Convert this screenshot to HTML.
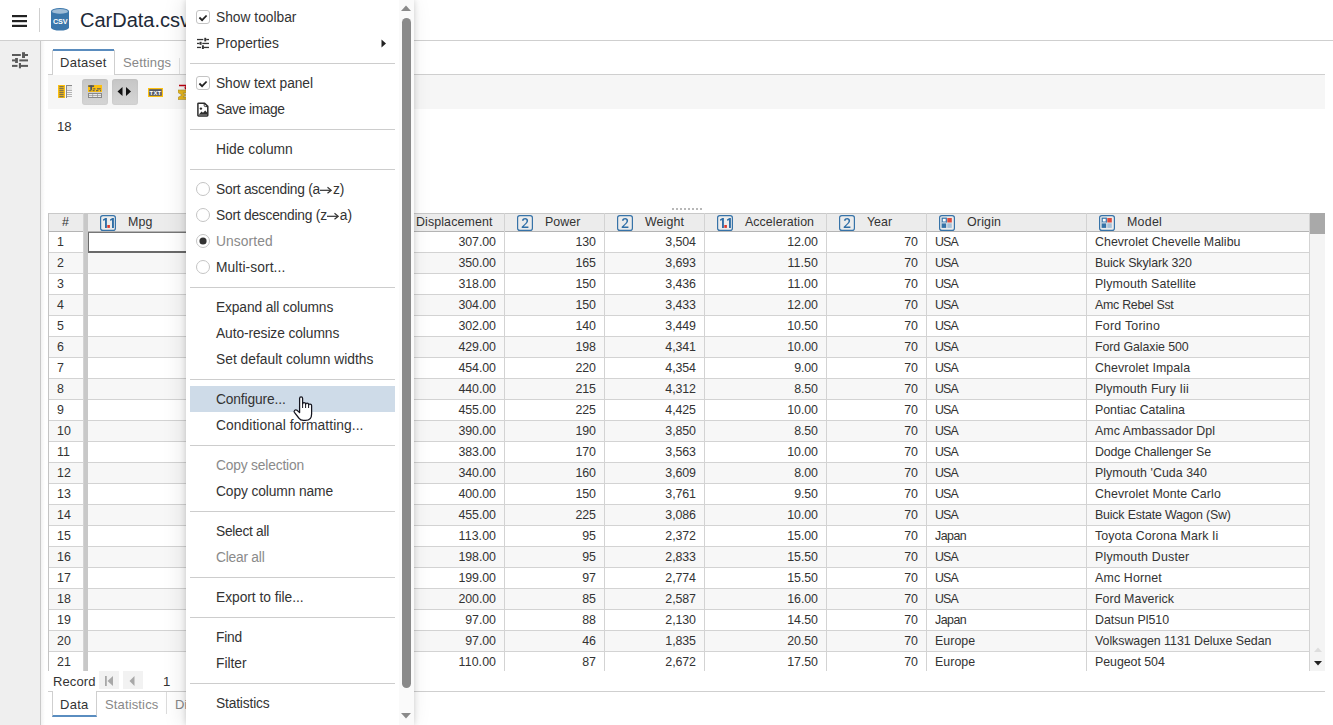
<!DOCTYPE html>
<html><head><meta charset="utf-8">
<style>
*{box-sizing:border-box;margin:0;padding:0}
html,body{width:1333px;height:725px;overflow:hidden;background:#fff;font-family:"Liberation Sans",sans-serif;color:#333;position:relative}
.abs{position:absolute}
#hdr{position:absolute;left:0;top:0;width:1333px;height:41px;border-bottom:1px solid #cfcfcf;background:#fff}
#side{position:absolute;left:0;top:41px;width:41px;height:684px;background:#efefef;border-right:1px solid #c9c9c9}
#sideshadow{position:absolute;left:41px;top:41px;width:4px;height:684px;background:linear-gradient(to right,rgba(0,0,0,0.05),rgba(0,0,0,0))}
.tab{position:absolute;font-size:13px;line-height:26px;color:#888;padding-left:8px}
.tabline{position:absolute;height:1px;background:#cfcfcf}
#tbar{position:absolute;left:48px;top:75px;width:1277px;height:34px;background:#f6f6f6}
.tbtn{position:absolute;top:79px;width:26px;height:26px;border-radius:3px;background:linear-gradient(#c6c6c6,#d5d5d5);box-shadow:inset 0 0 2px rgba(0,0,0,0.08)}
#tbl{position:absolute;left:0;top:0;width:1333px;height:671px;overflow:hidden}
#tblclip{position:absolute;left:48px;top:213px;width:1277px;height:458px;overflow:hidden}
#tblin{position:absolute;left:-48px;top:-213px;width:1333px;height:725px}
.hdrbg{position:absolute;left:48px;top:213px;width:1261px;height:19px;background:#ececec;border-top:1px solid #c9c9c9;border-bottom:1px solid #b4b4b4}
.hc{position:absolute;top:214px;height:17px;font-size:12.4px;line-height:17px;color:#333;white-space:nowrap}
.hcol .ti{position:absolute;left:13px;top:1px}
.hcol .ht{position:absolute;left:41px;top:0}
.row{position:absolute;left:48px;width:1261px;height:20px}
.hl{position:absolute;left:48px;width:1261px;height:1px;background:#d3d3d3}
.vl{position:absolute;top:213px;width:1px;height:458px;background:#d3d3d3}
.c{position:absolute;height:20px;font-size:12.4px;line-height:20px;color:#333;white-space:nowrap}
.cr{text-align:right}
#menu{position:absolute;left:186px;top:0;width:228px;height:725px;background:#fff;box-shadow:0 0 6px rgba(0,0,0,0.16),-3px 0 20px rgba(0,0,0,0.1)}
.mt{position:absolute;left:30px;height:26px;line-height:28px;font-size:13.8px;color:#333;white-space:nowrap}
.mt.dis{color:#8a8a8a}
.mi{position:absolute;left:10px}
.msep{position:absolute;left:4px;width:205px;height:1px;background:#cdcdcd}
.mhi{position:absolute;left:4px;width:205px;height:26px;background:#cedbe8}
</style></head><body>
<div id="hdr">
  <svg class="abs" style="left:12px;top:15px" width="15" height="12" viewBox="0 0 15 12"><rect x="0" y="0" width="15" height="2.2" fill="#222"/><rect x="0" y="5" width="15" height="2.2" fill="#222"/><rect x="0" y="9.8" width="15" height="2.2" fill="#222"/></svg>
  <div class="abs" style="left:39px;top:8px;width:1px;height:24px;background:#cfcfcf"></div>
  <svg class="abs" style="left:51px;top:8px" width="18" height="23" viewBox="0 0 18 23">
    <path d="M0 3.2 V19.6 A9 3 0 0 0 18 19.6 V3.2 Z" fill="#3b77ab"/>
    <ellipse cx="9" cy="3.2" rx="9" ry="3.1" fill="#3b77ab"/>
    <ellipse cx="9" cy="3.4" rx="8" ry="2.3" fill="#9fbdd7"/>
    <text x="9.2" y="15.6" text-anchor="middle" font-family="Liberation Sans" font-weight="bold" font-size="7.2" fill="#fff" letter-spacing="-0.2">CSV</text>
  </svg>
  <div class="abs" style="left:80px;top:6px;font-size:20px;line-height:28px;color:#1e2a38;white-space:nowrap">CarData.csv</div>
</div>
<div id="side">
  <svg class="abs" style="left:12px;top:11px" width="16" height="17" viewBox="0 0 16 17" fill="#5a5a5a">
    <rect x="0" y="2" width="8.8" height="2"/><rect x="10" y="0.2" width="3" height="5.8"/><rect x="12" y="2" width="4" height="2"/>
    <rect x="0" y="7.4" width="3.5" height="2"/><rect x="3.1" y="6" width="2.8" height="5"/><rect x="7.3" y="7.4" width="8.7" height="2"/>
    <rect x="0" y="12.9" width="5.5" height="2"/><rect x="6.9" y="11" width="2.1" height="5.3"/><rect x="8.3" y="12.9" width="7.7" height="2"/>
  </svg>
</div>
<div id="sideshadow"></div>

<!-- top tabs -->
<div class="tabline" style="left:48px;top:74px;width:4px"></div>
<div class="abs" style="left:52px;top:50px;width:63px;height:25px;border:1px solid #cfcfcf;border-top:none;border-bottom:none;background:#fff"></div><div class="abs" style="left:53px;top:49px;width:61px;height:2px;background:#5a8cbe"></div>
<div class="tab" style="left:52px;top:50px;color:#333;letter-spacing:0.26px">Dataset</div>
<div class="tab" style="left:115px;top:50px;letter-spacing:0.15px">Settings</div>
<div class="abs" style="left:179px;top:58px;width:1px;height:17px;background:#e4e4e4"></div>
<div class="tabline" style="left:115px;top:74px;width:1210px"></div>

<div id="tbar"></div>
<div class="tbtn" style="left:82px"></div>
<div class="tbtn" style="left:112px"></div>
<!-- icon 1 -->
<svg class="abs" style="left:58px;top:85px" width="15" height="13" viewBox="0 0 15 13">
  <rect x="0" y="0" width="7" height="13" fill="#fdc010"/>
  <g fill="#4d5566"><rect x="1.3" y="1.3" width="4.4" height="0.9"/><rect x="1.3" y="3.3" width="4.4" height="0.9"/><rect x="1.3" y="5.3" width="4.4" height="0.9"/><rect x="1.3" y="7.3" width="4.4" height="0.9"/><rect x="1.3" y="9.3" width="4.4" height="0.9"/><rect x="1.3" y="11.3" width="4.4" height="0.9"/></g>
  <rect x="8" y="0" width="1" height="13" fill="#8a8a8a"/>
  <rect x="9" y="0" width="5" height="1" fill="#8a8a8a"/><rect x="9" y="1" width="5" height="4" fill="#e4e4e4"/>
  <g fill="#b4b4b4"><rect x="9" y="5" width="5" height="1"/><rect x="9" y="7" width="5" height="1"/><rect x="9" y="9" width="5" height="1"/><rect x="9" y="11" width="5" height="1"/></g>
</svg>
<!-- icon 2 -->
<svg class="abs" style="left:88px;top:85px" width="14" height="13" viewBox="0 0 14 13">
  <rect x="0" y="0" width="14" height="7" fill="#fdc010"/>
  <g fill="#4a5263"><rect x="0.3" y="0.3" width="5.8" height="1.6"/><rect x="2.3" y="0.3" width="1.8" height="4.6"/><rect x="5.2" y="3.3" width="2.2" height="1.1"/><rect x="9" y="3.3" width="3.8" height="1.1"/><rect x="1.2" y="5.2" width="2.2" height="1"/><rect x="4.6" y="5.2" width="2" height="1"/><rect x="8" y="5.2" width="2.4" height="1"/><rect x="12" y="5.2" width="1" height="1"/></g>
  <rect x="0.5" y="8.5" width="13" height="4" fill="#e8e8e8" stroke="#888" stroke-width="1"/>
  <rect x="0.5" y="10.3" width="13" height="0.6" fill="#888"/><rect x="4.5" y="8.5" width="0.6" height="4" fill="#888"/><rect x="9" y="8.5" width="0.6" height="4" fill="#888"/>
</svg>
<!-- icon 3 arrows -->
<svg class="abs" style="left:117px;top:87px" width="15" height="9" viewBox="0 0 15 9"><path d="M5.5 0V9L0.5 4.5Z" fill="#111"/><path d="M9 0V9L14 4.5Z" fill="#111"/></svg>
<!-- txt icon -->
<svg class="abs" style="left:148px;top:88px" width="15" height="9" viewBox="0 0 15 9"><rect x="0" y="0" width="15" height="9" fill="#fdc010"/><rect x="1.2" y="1.2" width="12.6" height="6.6" fill="#555b68"/><text x="7.5" y="6.6" text-anchor="middle" font-family="Liberation Sans" font-weight="bold" font-size="6" fill="#fff" letter-spacing="0.2">TXT</text></svg>
<!-- sigma icon partial -->
<svg class="abs" style="left:178px;top:84px" width="12" height="16" viewBox="0 0 12 16"><path d="M1 1.5H8V4.5" fill="none" stroke="#c00010" stroke-width="1.5"/><path d="M6 3.5L8 6L10 3.5Z" fill="#c00010"/><path d="M0 6H12V9H5L8 11L5 13H12V15.5H0V13.5L4 11L0 8.5Z" fill="#e8b820" stroke="#a89030" stroke-width="0.6"/></svg>

<div class="abs" style="left:57px;top:118px;font-size:13.2px;line-height:18px;color:#333">18</div>
<div class="abs" style="left:672px;top:208px;width:30px;height:2px;background:repeating-linear-gradient(to right,#b8b8b8 0 2px,transparent 2px 4px)"></div>

<div id="tblclip"><div id="tblin">
<div class="hdrbg"></div>
<div class="row" style="top:232px;background:#fff"></div>
<div class="hl" style="top:252px"></div>
<div class="c" style="left:57px;top:232px">1</div>
<div class="c cr" style="left:375px;width:120.927px;top:232px;letter-spacing:-0.073px">307.00</div>
<div class="c cr" style="left:504px;width:91.969px;top:232px;letter-spacing:-0.031px">130</div>
<div class="c cr" style="left:604px;width:91.909px;top:232px;letter-spacing:-0.091px">3,504</div>
<div class="c cr" style="left:704px;width:113.919px;top:232px;letter-spacing:-0.081px">12.00</div>
<div class="c cr" style="left:826px;width:91.969px;top:232px;letter-spacing:-0.031px">70</div>
<div class="c" style="left:935px;top:232px;letter-spacing:-0.854px">USA</div>
<div class="c" style="left:1095px;top:232px;letter-spacing:0.035px">Chevrolet Chevelle Malibu</div>
<div class="row" style="top:253px;background:#f7f7f7"></div>
<div class="hl" style="top:273px"></div>
<div class="c" style="left:57px;top:253px">2</div>
<div class="c cr" style="left:375px;width:120.927px;top:253px;letter-spacing:-0.073px">350.00</div>
<div class="c cr" style="left:504px;width:91.969px;top:253px;letter-spacing:-0.031px">165</div>
<div class="c cr" style="left:604px;width:91.909px;top:253px;letter-spacing:-0.091px">3,693</div>
<div class="c cr" style="left:704px;width:114.103px;top:253px;letter-spacing:0.103px">11.50</div>
<div class="c cr" style="left:826px;width:91.969px;top:253px;letter-spacing:-0.031px">70</div>
<div class="c" style="left:935px;top:253px;letter-spacing:-0.854px">USA</div>
<div class="c" style="left:1095px;top:253px;letter-spacing:-0.097px">Buick Skylark 320</div>
<div class="row" style="top:274px;background:#fff"></div>
<div class="hl" style="top:294px"></div>
<div class="c" style="left:57px;top:274px">3</div>
<div class="c cr" style="left:375px;width:120.927px;top:274px;letter-spacing:-0.073px">318.00</div>
<div class="c cr" style="left:504px;width:91.969px;top:274px;letter-spacing:-0.031px">150</div>
<div class="c cr" style="left:604px;width:91.909px;top:274px;letter-spacing:-0.091px">3,436</div>
<div class="c cr" style="left:704px;width:114.103px;top:274px;letter-spacing:0.103px">11.00</div>
<div class="c cr" style="left:826px;width:91.969px;top:274px;letter-spacing:-0.031px">70</div>
<div class="c" style="left:935px;top:274px;letter-spacing:-0.854px">USA</div>
<div class="c" style="left:1095px;top:274px;letter-spacing:0.108px">Plymouth Satellite</div>
<div class="row" style="top:295px;background:#f7f7f7"></div>
<div class="hl" style="top:315px"></div>
<div class="c" style="left:57px;top:295px">4</div>
<div class="c cr" style="left:375px;width:120.927px;top:295px;letter-spacing:-0.073px">304.00</div>
<div class="c cr" style="left:504px;width:91.969px;top:295px;letter-spacing:-0.031px">150</div>
<div class="c cr" style="left:604px;width:91.909px;top:295px;letter-spacing:-0.091px">3,433</div>
<div class="c cr" style="left:704px;width:113.919px;top:295px;letter-spacing:-0.081px">12.00</div>
<div class="c cr" style="left:826px;width:91.969px;top:295px;letter-spacing:-0.031px">70</div>
<div class="c" style="left:935px;top:295px;letter-spacing:-0.854px">USA</div>
<div class="c" style="left:1095px;top:295px;letter-spacing:-0.263px">Amc Rebel Sst</div>
<div class="row" style="top:316px;background:#fff"></div>
<div class="hl" style="top:336px"></div>
<div class="c" style="left:57px;top:316px">5</div>
<div class="c cr" style="left:375px;width:120.927px;top:316px;letter-spacing:-0.073px">302.00</div>
<div class="c cr" style="left:504px;width:91.969px;top:316px;letter-spacing:-0.031px">140</div>
<div class="c cr" style="left:604px;width:91.909px;top:316px;letter-spacing:-0.091px">3,449</div>
<div class="c cr" style="left:704px;width:113.919px;top:316px;letter-spacing:-0.081px">10.50</div>
<div class="c cr" style="left:826px;width:91.969px;top:316px;letter-spacing:-0.031px">70</div>
<div class="c" style="left:935px;top:316px;letter-spacing:-0.854px">USA</div>
<div class="c" style="left:1095px;top:316px;letter-spacing:0.246px">Ford Torino</div>
<div class="row" style="top:337px;background:#f7f7f7"></div>
<div class="hl" style="top:357px"></div>
<div class="c" style="left:57px;top:337px">6</div>
<div class="c cr" style="left:375px;width:120.927px;top:337px;letter-spacing:-0.073px">429.00</div>
<div class="c cr" style="left:504px;width:91.969px;top:337px;letter-spacing:-0.031px">198</div>
<div class="c cr" style="left:604px;width:91.909px;top:337px;letter-spacing:-0.091px">4,341</div>
<div class="c cr" style="left:704px;width:113.919px;top:337px;letter-spacing:-0.081px">10.00</div>
<div class="c cr" style="left:826px;width:91.969px;top:337px;letter-spacing:-0.031px">70</div>
<div class="c" style="left:935px;top:337px;letter-spacing:-0.854px">USA</div>
<div class="c" style="left:1095px;top:337px;letter-spacing:-0.088px">Ford Galaxie 500</div>
<div class="row" style="top:358px;background:#fff"></div>
<div class="hl" style="top:378px"></div>
<div class="c" style="left:57px;top:358px">7</div>
<div class="c cr" style="left:375px;width:120.927px;top:358px;letter-spacing:-0.073px">454.00</div>
<div class="c cr" style="left:504px;width:91.969px;top:358px;letter-spacing:-0.031px">220</div>
<div class="c cr" style="left:604px;width:91.909px;top:358px;letter-spacing:-0.091px">4,354</div>
<div class="c cr" style="left:704px;width:113.906px;top:358px;letter-spacing:-0.094px">9.00</div>
<div class="c cr" style="left:826px;width:91.969px;top:358px;letter-spacing:-0.031px">70</div>
<div class="c" style="left:935px;top:358px;letter-spacing:-0.854px">USA</div>
<div class="c" style="left:1095px;top:358px;letter-spacing:0.093px">Chevrolet Impala</div>
<div class="row" style="top:379px;background:#f7f7f7"></div>
<div class="hl" style="top:399px"></div>
<div class="c" style="left:57px;top:379px">8</div>
<div class="c cr" style="left:375px;width:120.927px;top:379px;letter-spacing:-0.073px">440.00</div>
<div class="c cr" style="left:504px;width:91.969px;top:379px;letter-spacing:-0.031px">215</div>
<div class="c cr" style="left:604px;width:91.909px;top:379px;letter-spacing:-0.091px">4,312</div>
<div class="c cr" style="left:704px;width:113.906px;top:379px;letter-spacing:-0.094px">8.50</div>
<div class="c cr" style="left:826px;width:91.969px;top:379px;letter-spacing:-0.031px">70</div>
<div class="c" style="left:935px;top:379px;letter-spacing:-0.854px">USA</div>
<div class="c" style="left:1095px;top:379px;letter-spacing:0.087px">Plymouth Fury Iii</div>
<div class="row" style="top:400px;background:#fff"></div>
<div class="hl" style="top:420px"></div>
<div class="c" style="left:57px;top:400px">9</div>
<div class="c cr" style="left:375px;width:120.927px;top:400px;letter-spacing:-0.073px">455.00</div>
<div class="c cr" style="left:504px;width:91.969px;top:400px;letter-spacing:-0.031px">225</div>
<div class="c cr" style="left:604px;width:91.909px;top:400px;letter-spacing:-0.091px">4,425</div>
<div class="c cr" style="left:704px;width:113.919px;top:400px;letter-spacing:-0.081px">10.00</div>
<div class="c cr" style="left:826px;width:91.969px;top:400px;letter-spacing:-0.031px">70</div>
<div class="c" style="left:935px;top:400px;letter-spacing:-0.854px">USA</div>
<div class="c" style="left:1095px;top:400px;letter-spacing:-0.018px">Pontiac Catalina</div>
<div class="row" style="top:421px;background:#f7f7f7"></div>
<div class="hl" style="top:441px"></div>
<div class="c" style="left:57px;top:421px">10</div>
<div class="c cr" style="left:375px;width:120.927px;top:421px;letter-spacing:-0.073px">390.00</div>
<div class="c cr" style="left:504px;width:91.969px;top:421px;letter-spacing:-0.031px">190</div>
<div class="c cr" style="left:604px;width:91.909px;top:421px;letter-spacing:-0.091px">3,850</div>
<div class="c cr" style="left:704px;width:113.906px;top:421px;letter-spacing:-0.094px">8.50</div>
<div class="c cr" style="left:826px;width:91.969px;top:421px;letter-spacing:-0.031px">70</div>
<div class="c" style="left:935px;top:421px;letter-spacing:-0.854px">USA</div>
<div class="c" style="left:1095px;top:421px;letter-spacing:0.051px">Amc Ambassador Dpl</div>
<div class="row" style="top:442px;background:#fff"></div>
<div class="hl" style="top:462px"></div>
<div class="c" style="left:57px;top:442px">11</div>
<div class="c cr" style="left:375px;width:120.927px;top:442px;letter-spacing:-0.073px">383.00</div>
<div class="c cr" style="left:504px;width:91.969px;top:442px;letter-spacing:-0.031px">170</div>
<div class="c cr" style="left:604px;width:91.909px;top:442px;letter-spacing:-0.091px">3,563</div>
<div class="c cr" style="left:704px;width:113.919px;top:442px;letter-spacing:-0.081px">10.00</div>
<div class="c cr" style="left:826px;width:91.969px;top:442px;letter-spacing:-0.031px">70</div>
<div class="c" style="left:935px;top:442px;letter-spacing:-0.854px">USA</div>
<div class="c" style="left:1095px;top:442px;letter-spacing:-0.131px">Dodge Challenger Se</div>
<div class="row" style="top:463px;background:#f7f7f7"></div>
<div class="hl" style="top:483px"></div>
<div class="c" style="left:57px;top:463px">12</div>
<div class="c cr" style="left:375px;width:120.927px;top:463px;letter-spacing:-0.073px">340.00</div>
<div class="c cr" style="left:504px;width:91.969px;top:463px;letter-spacing:-0.031px">160</div>
<div class="c cr" style="left:604px;width:91.909px;top:463px;letter-spacing:-0.091px">3,609</div>
<div class="c cr" style="left:704px;width:113.906px;top:463px;letter-spacing:-0.094px">8.00</div>
<div class="c cr" style="left:826px;width:91.969px;top:463px;letter-spacing:-0.031px">70</div>
<div class="c" style="left:935px;top:463px;letter-spacing:-0.854px">USA</div>
<div class="c" style="left:1095px;top:463px;letter-spacing:0.044px">Plymouth 'Cuda 340</div>
<div class="row" style="top:484px;background:#fff"></div>
<div class="hl" style="top:504px"></div>
<div class="c" style="left:57px;top:484px">13</div>
<div class="c cr" style="left:375px;width:120.927px;top:484px;letter-spacing:-0.073px">400.00</div>
<div class="c cr" style="left:504px;width:91.969px;top:484px;letter-spacing:-0.031px">150</div>
<div class="c cr" style="left:604px;width:91.909px;top:484px;letter-spacing:-0.091px">3,761</div>
<div class="c cr" style="left:704px;width:113.906px;top:484px;letter-spacing:-0.094px">9.50</div>
<div class="c cr" style="left:826px;width:91.969px;top:484px;letter-spacing:-0.031px">70</div>
<div class="c" style="left:935px;top:484px;letter-spacing:-0.854px">USA</div>
<div class="c" style="left:1095px;top:484px;letter-spacing:0.091px">Chevrolet Monte Carlo</div>
<div class="row" style="top:505px;background:#f7f7f7"></div>
<div class="hl" style="top:525px"></div>
<div class="c" style="left:57px;top:505px">14</div>
<div class="c cr" style="left:375px;width:120.927px;top:505px;letter-spacing:-0.073px">455.00</div>
<div class="c cr" style="left:504px;width:91.969px;top:505px;letter-spacing:-0.031px">225</div>
<div class="c cr" style="left:604px;width:91.909px;top:505px;letter-spacing:-0.091px">3,086</div>
<div class="c cr" style="left:704px;width:113.919px;top:505px;letter-spacing:-0.081px">10.00</div>
<div class="c cr" style="left:826px;width:91.969px;top:505px;letter-spacing:-0.031px">70</div>
<div class="c" style="left:935px;top:505px;letter-spacing:-0.854px">USA</div>
<div class="c" style="left:1095px;top:505px;letter-spacing:-0.185px">Buick Estate Wagon (Sw)</div>
<div class="row" style="top:526px;background:#fff"></div>
<div class="hl" style="top:546px"></div>
<div class="c" style="left:57px;top:526px">15</div>
<div class="c cr" style="left:375px;width:121.081px;top:526px;letter-spacing:0.081px">113.00</div>
<div class="c cr" style="left:504px;width:91.969px;top:526px;letter-spacing:-0.031px">95</div>
<div class="c cr" style="left:604px;width:91.909px;top:526px;letter-spacing:-0.091px">2,372</div>
<div class="c cr" style="left:704px;width:113.919px;top:526px;letter-spacing:-0.081px">15.00</div>
<div class="c cr" style="left:826px;width:91.969px;top:526px;letter-spacing:-0.031px">70</div>
<div class="c" style="left:935px;top:526px;letter-spacing:-0.5px">Japan</div>
<div class="c" style="left:1095px;top:526px;letter-spacing:0.106px">Toyota Corona Mark Ii</div>
<div class="row" style="top:547px;background:#f7f7f7"></div>
<div class="hl" style="top:567px"></div>
<div class="c" style="left:57px;top:547px">16</div>
<div class="c cr" style="left:375px;width:120.927px;top:547px;letter-spacing:-0.073px">198.00</div>
<div class="c cr" style="left:504px;width:91.969px;top:547px;letter-spacing:-0.031px">95</div>
<div class="c cr" style="left:604px;width:91.909px;top:547px;letter-spacing:-0.091px">2,833</div>
<div class="c cr" style="left:704px;width:113.919px;top:547px;letter-spacing:-0.081px">15.50</div>
<div class="c cr" style="left:826px;width:91.969px;top:547px;letter-spacing:-0.031px">70</div>
<div class="c" style="left:935px;top:547px;letter-spacing:-0.854px">USA</div>
<div class="c" style="left:1095px;top:547px;letter-spacing:0.189px">Plymouth Duster</div>
<div class="row" style="top:568px;background:#fff"></div>
<div class="hl" style="top:588px"></div>
<div class="c" style="left:57px;top:568px">17</div>
<div class="c cr" style="left:375px;width:120.927px;top:568px;letter-spacing:-0.073px">199.00</div>
<div class="c cr" style="left:504px;width:91.969px;top:568px;letter-spacing:-0.031px">97</div>
<div class="c cr" style="left:604px;width:91.909px;top:568px;letter-spacing:-0.091px">2,774</div>
<div class="c cr" style="left:704px;width:113.919px;top:568px;letter-spacing:-0.081px">15.50</div>
<div class="c cr" style="left:826px;width:91.969px;top:568px;letter-spacing:-0.031px">70</div>
<div class="c" style="left:935px;top:568px;letter-spacing:-0.854px">USA</div>
<div class="c" style="left:1095px;top:568px;letter-spacing:0.15px">Amc Hornet</div>
<div class="row" style="top:589px;background:#f7f7f7"></div>
<div class="hl" style="top:609px"></div>
<div class="c" style="left:57px;top:589px">18</div>
<div class="c cr" style="left:375px;width:120.927px;top:589px;letter-spacing:-0.073px">200.00</div>
<div class="c cr" style="left:504px;width:91.969px;top:589px;letter-spacing:-0.031px">85</div>
<div class="c cr" style="left:604px;width:91.909px;top:589px;letter-spacing:-0.091px">2,587</div>
<div class="c cr" style="left:704px;width:113.919px;top:589px;letter-spacing:-0.081px">16.00</div>
<div class="c cr" style="left:826px;width:91.969px;top:589px;letter-spacing:-0.031px">70</div>
<div class="c" style="left:935px;top:589px;letter-spacing:-0.854px">USA</div>
<div class="c" style="left:1095px;top:589px;letter-spacing:0.037px">Ford Maverick</div>
<div class="row" style="top:610px;background:#fff"></div>
<div class="hl" style="top:630px"></div>
<div class="c" style="left:57px;top:610px">19</div>
<div class="c cr" style="left:375px;width:120.919px;top:610px;letter-spacing:-0.081px">97.00</div>
<div class="c cr" style="left:504px;width:91.969px;top:610px;letter-spacing:-0.031px">88</div>
<div class="c cr" style="left:604px;width:91.909px;top:610px;letter-spacing:-0.091px">2,130</div>
<div class="c cr" style="left:704px;width:113.919px;top:610px;letter-spacing:-0.081px">14.50</div>
<div class="c cr" style="left:826px;width:91.969px;top:610px;letter-spacing:-0.031px">70</div>
<div class="c" style="left:935px;top:610px;letter-spacing:-0.5px">Japan</div>
<div class="c" style="left:1095px;top:610px;letter-spacing:-0.029px">Datsun Pl510</div>
<div class="row" style="top:631px;background:#f7f7f7"></div>
<div class="hl" style="top:651px"></div>
<div class="c" style="left:57px;top:631px">20</div>
<div class="c cr" style="left:375px;width:120.919px;top:631px;letter-spacing:-0.081px">97.00</div>
<div class="c cr" style="left:504px;width:91.969px;top:631px;letter-spacing:-0.031px">46</div>
<div class="c cr" style="left:604px;width:91.909px;top:631px;letter-spacing:-0.091px">1,835</div>
<div class="c cr" style="left:704px;width:113.919px;top:631px;letter-spacing:-0.081px">20.50</div>
<div class="c cr" style="left:826px;width:91.969px;top:631px;letter-spacing:-0.031px">70</div>
<div class="c" style="left:935px;top:631px;letter-spacing:0.047px">Europe</div>
<div class="c" style="left:1095px;top:631px;letter-spacing:-0.041px">Volkswagen 1131 Deluxe Sedan</div>
<div class="row" style="top:652px;background:#fff"></div>
<div class="hl" style="top:672px"></div>
<div class="c" style="left:57px;top:652px">21</div>
<div class="c cr" style="left:375px;width:121.081px;top:652px;letter-spacing:0.081px">110.00</div>
<div class="c cr" style="left:504px;width:91.969px;top:652px;letter-spacing:-0.031px">87</div>
<div class="c cr" style="left:604px;width:91.909px;top:652px;letter-spacing:-0.091px">2,672</div>
<div class="c cr" style="left:704px;width:113.919px;top:652px;letter-spacing:-0.081px">17.50</div>
<div class="c cr" style="left:826px;width:91.969px;top:652px;letter-spacing:-0.031px">70</div>
<div class="c" style="left:935px;top:652px;letter-spacing:0.047px">Europe</div>
<div class="c" style="left:1095px;top:652px;letter-spacing:-0.045px">Peugeot 504</div>
<div class="hc" style="left:48px;width:35px;text-align:center">#</div>
<div class="hc hcol" style="left:87px;width:163px"><svg class="ti" width="16" height="16" viewBox="0 0 16 16"><rect x="0.6" y="0.6" width="14.8" height="14.8" rx="2.2" fill="none" stroke="#3773a8" stroke-width="1.2"/><path d="M2.9 4.4L5.3 2.9H6.9V12.9H5.0V5.0L3.5 5.9Z" fill="#2f6ea6"/><path d="M9.9 4.4L12.3 2.9H13.9V12.9H12.0V5.0L10.5 5.9Z" fill="#2f6ea6"/><rect x="7.3" y="10" width="2.6" height="2.9" fill="#e0392b"/></svg><span class="ht" style="letter-spacing:0.182px">Mpg</span></div>
<div class="hc hcol" style="left:250px;width:125px"><svg class="ti" width="16" height="16" viewBox="0 0 16 16"><rect x="0.6" y="0.6" width="14.8" height="14.8" rx="2.2" fill="none" stroke="#3773a8" stroke-width="1.2"/><path d="M4.9 5.4C5.4 3.9 6.7 3.1 8.1 3.1C9.9 3.1 11.1 4.2 11.1 5.8C11.1 7.3 10 8.4 8.4 9.8L6.7 11.4H11.4V12.9H4.7V11.7L7.4 9.2C8.9 7.8 9.5 7 9.5 5.9C9.5 5 8.9 4.5 8.1 4.5C7.3 4.5 6.7 5 6.4 5.9Z" fill="#2f6ea6"/></svg><span class="ht" style="letter-spacing:0.005px">Cylinders</span></div>
<div class="hc hcol" style="left:375px;width:129px"><svg class="ti" width="16" height="16" viewBox="0 0 16 16"><rect x="0.6" y="0.6" width="14.8" height="14.8" rx="2.2" fill="none" stroke="#3773a8" stroke-width="1.2"/><path d="M2.9 4.4L5.3 2.9H6.9V12.9H5.0V5.0L3.5 5.9Z" fill="#2f6ea6"/><path d="M9.9 4.4L12.3 2.9H13.9V12.9H12.0V5.0L10.5 5.9Z" fill="#2f6ea6"/><rect x="7.3" y="10" width="2.6" height="2.9" fill="#e0392b"/></svg><span class="ht" style="letter-spacing:0.116px">Displacement</span></div>
<div class="hc hcol" style="left:504px;width:100px"><svg class="ti" width="16" height="16" viewBox="0 0 16 16"><rect x="0.6" y="0.6" width="14.8" height="14.8" rx="2.2" fill="none" stroke="#3773a8" stroke-width="1.2"/><path d="M4.9 5.4C5.4 3.9 6.7 3.1 8.1 3.1C9.9 3.1 11.1 4.2 11.1 5.8C11.1 7.3 10 8.4 8.4 9.8L6.7 11.4H11.4V12.9H4.7V11.7L7.4 9.2C8.9 7.8 9.5 7 9.5 5.9C9.5 5 8.9 4.5 8.1 4.5C7.3 4.5 6.7 5 6.4 5.9Z" fill="#2f6ea6"/></svg><span class="ht" style="letter-spacing:0.05px">Power</span></div>
<div class="hc hcol" style="left:604px;width:100px"><svg class="ti" width="16" height="16" viewBox="0 0 16 16"><rect x="0.6" y="0.6" width="14.8" height="14.8" rx="2.2" fill="none" stroke="#3773a8" stroke-width="1.2"/><path d="M4.9 5.4C5.4 3.9 6.7 3.1 8.1 3.1C9.9 3.1 11.1 4.2 11.1 5.8C11.1 7.3 10 8.4 8.4 9.8L6.7 11.4H11.4V12.9H4.7V11.7L7.4 9.2C8.9 7.8 9.5 7 9.5 5.9C9.5 5 8.9 4.5 8.1 4.5C7.3 4.5 6.7 5 6.4 5.9Z" fill="#2f6ea6"/></svg><span class="ht" style="letter-spacing:0.112px">Weight</span></div>
<div class="hc hcol" style="left:704px;width:122px"><svg class="ti" width="16" height="16" viewBox="0 0 16 16"><rect x="0.6" y="0.6" width="14.8" height="14.8" rx="2.2" fill="none" stroke="#3773a8" stroke-width="1.2"/><path d="M2.9 4.4L5.3 2.9H6.9V12.9H5.0V5.0L3.5 5.9Z" fill="#2f6ea6"/><path d="M9.9 4.4L12.3 2.9H13.9V12.9H12.0V5.0L10.5 5.9Z" fill="#2f6ea6"/><rect x="7.3" y="10" width="2.6" height="2.9" fill="#e0392b"/></svg><span class="ht" style="letter-spacing:0.073px">Acceleration</span></div>
<div class="hc hcol" style="left:826px;width:100px"><svg class="ti" width="16" height="16" viewBox="0 0 16 16"><rect x="0.6" y="0.6" width="14.8" height="14.8" rx="2.2" fill="none" stroke="#3773a8" stroke-width="1.2"/><path d="M4.9 5.4C5.4 3.9 6.7 3.1 8.1 3.1C9.9 3.1 11.1 4.2 11.1 5.8C11.1 7.3 10 8.4 8.4 9.8L6.7 11.4H11.4V12.9H4.7V11.7L7.4 9.2C8.9 7.8 9.5 7 9.5 5.9C9.5 5 8.9 4.5 8.1 4.5C7.3 4.5 6.7 5 6.4 5.9Z" fill="#2f6ea6"/></svg><span class="ht" style="letter-spacing:-0.004px">Year</span></div>
<div class="hc hcol" style="left:926px;width:160px"><svg class="ti" width="16" height="16" viewBox="0 0 16 16"><rect x="0.6" y="0.6" width="14.8" height="14.8" rx="2.2" fill="none" stroke="#3773a8" stroke-width="1.2"/><rect x="3.2" y="3.2" width="4.1" height="3.9" fill="#fff" stroke="#3573a8" stroke-width="1.2"/><rect x="8.3" y="3" width="4.5" height="4.5" fill="#dd4a3c"/><rect x="2.6" y="8.3" width="4.6" height="4.6" fill="#3573a8"/><rect x="8.3" y="8.3" width="4.5" height="4.6" fill="#a8c2da"/><rect x="2.6" y="7.1" width="4.6" height="1.2" fill="#a8c2da"/></svg><span class="ht" style="letter-spacing:0.188px">Origin</span></div>
<div class="hc hcol" style="left:1086px;width:223px"><svg class="ti" width="16" height="16" viewBox="0 0 16 16"><rect x="0.6" y="0.6" width="14.8" height="14.8" rx="2.2" fill="none" stroke="#3773a8" stroke-width="1.2"/><rect x="3.2" y="3.2" width="4.1" height="3.9" fill="#fff" stroke="#3573a8" stroke-width="1.2"/><rect x="8.3" y="3" width="4.5" height="4.5" fill="#dd4a3c"/><rect x="2.6" y="8.3" width="4.6" height="4.6" fill="#3573a8"/><rect x="8.3" y="8.3" width="4.5" height="4.6" fill="#a8c2da"/><rect x="2.6" y="7.1" width="4.6" height="1.2" fill="#a8c2da"/></svg><span class="ht" style="letter-spacing:0.275px">Model</span></div>
<div class="vl" style="left:83px"></div>
<div class="vl" style="left:250px"></div>
<div class="vl" style="left:375px"></div>
<div class="vl" style="left:504px"></div>
<div class="vl" style="left:604px"></div>
<div class="vl" style="left:704px"></div>
<div class="vl" style="left:826px"></div>
<div class="vl" style="left:926px"></div>
<div class="vl" style="left:1086px"></div>
<div class="vl" style="left:1309px"></div>
<div class="abs" style="left:84px;top:213px;width:4px;height:458px;background:#c8c8c8"></div>
<div class="abs" style="left:48px;top:213px;width:1px;height:458px;background:#c4c4c4"></div>
<div class="abs" style="left:88px;top:232px;width:300px;height:21px;border:2px solid #6a6a6a;border-top:1px solid #777;border-left:1px solid #6a6a6a"></div>
<div class="abs" style="left:1310px;top:213px;width:15px;height:458px;background:#f4f4f4"></div>
<div class="abs" style="left:1310px;top:213px;width:15px;height:21px;background:#a9a9a9"></div>
<svg class="abs" style="left:1314px;top:647px" width="8" height="5" viewBox="0 0 8 5"><path d="M0 5L4 0.5L8 5Z" fill="#ddd"/></svg>
<svg class="abs" style="left:1314px;top:661px" width="8" height="5" viewBox="0 0 8 5"><path d="M0 0L4 4.5L8 0Z" fill="#222"/></svg>
</div></div>

<!-- record bar -->
<div class="abs" style="left:53px;top:673px;font-size:13px;line-height:18px;color:#333;letter-spacing:0.12px">Record</div>
<div class="abs" style="left:99px;top:671px;width:20px;height:18px;background:#f2f2f2"></div>
<div class="abs" style="left:123px;top:671px;width:20px;height:18px;background:#f2f2f2"></div>
<svg class="abs" style="left:105px;top:676px" width="9" height="10" viewBox="0 0 9 10"><rect x="0" y="0" width="1.8" height="10" fill="#a8a8a8"/><path d="M8 0V10L2.5 5Z" fill="#a8a8a8"/></svg>
<svg class="abs" style="left:129px;top:676px" width="6" height="10" viewBox="0 0 6 10"><path d="M5.5 0V10L0.5 5Z" fill="#a8a8a8"/></svg>
<div class="abs" style="left:163px;top:673px;font-size:13.2px;line-height:18px;color:#333">1</div>

<!-- bottom tabs -->
<div class="tabline" style="left:48px;top:691px;width:4px"></div>
<div class="abs" style="left:52px;top:691px;width:45px;height:26px;border:1px solid #cfcfcf;border-bottom:2px solid #5a8dc0;border-top:none;background:#fff"></div>
<div class="tab" style="left:52px;top:692px;color:#333;letter-spacing:0.26px">Data</div>
<div class="tab" style="left:97px;top:692px;letter-spacing:0.14px">Statistics</div>
<div class="abs" style="left:166px;top:692px;width:1px;height:22px;background:#dcdcdc"></div>
<div class="tab" style="left:167px;top:692px">Di</div>
<div class="tabline" style="left:97px;top:691px;width:1228px"></div>

<div id="menu">
<svg class="mi" style="top:10px" width="14" height="14" viewBox="0 0 14 14"><rect x="0.5" y="0.5" width="13" height="13" rx="2.5" fill="#fff" stroke="#c4c4c4"/><path d="M3.4 7.5 L6.1 10.2 L10.6 5.5" fill="none" stroke="#222" stroke-width="1.8"/></svg>
<div class="mt" style="top:4px;letter-spacing:-0.007px">Show toolbar</div>
<svg class="mi" style="top:37px;left:11px" width="12" height="13" viewBox="0 0 12 13" fill="#333"><rect x="0" y="1.9" width="6.3" height="1.3"/><rect x="7.3" y="0.8" width="1.9" height="3.6"/><rect x="9.2" y="1.9" width="2.8" height="1.3"/><rect x="0" y="5.8" width="2.6" height="1.3"/><rect x="2.6" y="4.8" width="2" height="3"/><rect x="5.3" y="5.8" width="6.7" height="1.3"/><rect x="0" y="9.8" width="4" height="1.3"/><rect x="4.9" y="8.3" width="2" height="3.7"/><rect x="6.9" y="9.8" width="5.1" height="1.3"/></svg>
<div class="mt" style="top:30px;letter-spacing:0.008px">Properties</div>
<svg class="mi" style="top:39px;left:195px" width="6" height="9" viewBox="0 0 6 9"><path d="M0.5 0.5L5 4.5L0.5 8.5Z" fill="#222"/></svg>
<div class="msep" style="top:63px"></div>
<svg class="mi" style="top:76px" width="14" height="14" viewBox="0 0 14 14"><rect x="0.5" y="0.5" width="13" height="13" rx="2.5" fill="#fff" stroke="#c4c4c4"/><path d="M3.4 7.5 L6.1 10.2 L10.6 5.5" fill="none" stroke="#222" stroke-width="1.8"/></svg>
<div class="mt" style="top:70px;letter-spacing:-0.086px">Show text panel</div>
<svg class="mi" style="top:102px;left:11px" width="12" height="15" viewBox="0 0 12 15"><path d="M1.6 1.2H7.6L10.8 4.4V13.2Q10.8 13.9 10.1 13.9H1.6Q0.9 13.9 0.9 13.2V1.9Q0.9 1.2 1.6 1.2Z" fill="#fff" stroke="#2d2d2d" stroke-width="1.5" stroke-linejoin="round"/><circle cx="3.9" cy="6.6" r="1.2" fill="#2d2d2d"/><path d="M7.2 1.5L7.2 3.5Q7.2 4.6 8.5 4.6H10.6" fill="none" stroke="#2d2d2d" stroke-width="1"/><path d="M1.6 12.8L4.6 9.6L6 10.8L8.2 8.4L10.1 10.6V12.8Z" fill="#2d2d2d"/></svg>
<div class="mt" style="top:96px;letter-spacing:-0.445px">Save image</div>
<div class="msep" style="top:129px"></div>

<div class="mt" style="top:136px;letter-spacing:0.01px">Hide column</div>
<div class="msep" style="top:169px"></div>
<svg class="mi" style="top:182px" width="14" height="14" viewBox="0 0 14 14"><circle cx="7" cy="7" r="6.5" fill="#fff" stroke="#c4c4c4"/></svg>
<div class="mt" style="top:176px;letter-spacing:0px"><span style="letter-spacing:-0.249px">Sort ascending (a</span><svg width="12" height="8" viewBox="0 0 12 8" style="vertical-align:0px;margin:0 0.5px"><path d="M0 4.3H10.5" stroke="#333" stroke-width="1.2"/><path d="M7.5 1.3L11.2 4.3L7.5 7.3" fill="none" stroke="#333" stroke-width="1.2"/></svg><span>z)</span></div>
<svg class="mi" style="top:208px" width="14" height="14" viewBox="0 0 14 14"><circle cx="7" cy="7" r="6.5" fill="#fff" stroke="#c4c4c4"/></svg>
<div class="mt" style="top:202px;letter-spacing:0px"><span style="letter-spacing:-0.235px">Sort descending (z</span><svg width="12" height="8" viewBox="0 0 12 8" style="vertical-align:0px;margin:0 0.5px"><path d="M0 4.3H10.5" stroke="#333" stroke-width="1.2"/><path d="M7.5 1.3L11.2 4.3L7.5 7.3" fill="none" stroke="#333" stroke-width="1.2"/></svg><span>a)</span></div>
<svg class="mi" style="top:234px" width="14" height="14" viewBox="0 0 14 14"><circle cx="7" cy="7" r="6.5" fill="#fff" stroke="#c4c4c4"/><circle cx="7" cy="7" r="3.6" fill="#333"/></svg>
<div class="mt dis" style="top:228px;letter-spacing:0.088px">Unsorted</div>
<svg class="mi" style="top:260px" width="14" height="14" viewBox="0 0 14 14"><circle cx="7" cy="7" r="6.5" fill="#fff" stroke="#c4c4c4"/></svg>
<div class="mt" style="top:254px;letter-spacing:0.084px">Multi-sort...</div>
<div class="msep" style="top:287px"></div>

<div class="mt" style="top:294px;letter-spacing:-0.137px">Expand all columns</div>

<div class="mt" style="top:320px;letter-spacing:-0.094px">Auto-resize columns</div>

<div class="mt" style="top:346px;letter-spacing:0.007px">Set default column widths</div>
<div class="msep" style="top:379px"></div>
<div class="mhi" style="top:386px"></div>

<div class="mt" style="top:386px;letter-spacing:-0.146px">Configure...</div>

<div class="mt" style="top:412px;letter-spacing:0.071px">Conditional formatting...</div>
<div class="msep" style="top:445px"></div>

<div class="mt dis" style="top:452px;letter-spacing:-0.186px">Copy selection</div>

<div class="mt" style="top:478px;letter-spacing:-0.113px">Copy column name</div>
<div class="msep" style="top:511px"></div>

<div class="mt" style="top:518px;letter-spacing:-0.294px">Select all</div>

<div class="mt dis" style="top:544px;letter-spacing:-0.238px">Clear all</div>
<div class="msep" style="top:577px"></div>

<div class="mt" style="top:584px;letter-spacing:-0.039px">Export to file...</div>
<div class="msep" style="top:617px"></div>

<div class="mt" style="top:624px;letter-spacing:-0.23px">Find</div>

<div class="mt" style="top:650px;letter-spacing:-0.021px">Filter</div>
<div class="msep" style="top:683px"></div>

<div class="mt" style="top:690px;letter-spacing:-0.173px">Statistics</div>
<div class="abs" style="left:213px;top:0;width:15px;height:725px;background:#fafafa"></div>
<svg class="abs" style="left:215px;top:5px" width="10" height="6" viewBox="0 0 10 6"><path d="M0 6L5 0.5L10 6Z" fill="#8a8a8a"/></svg>
<div class="abs" style="left:216px;top:18px;width:9px;height:670px;border-radius:4.5px;background:#8a8a8a"></div>
<svg class="abs" style="left:215px;top:713px" width="10" height="6" viewBox="0 0 10 6"><path d="M0 0L5 5.5L10 0Z" fill="#8a8a8a"/></svg>
</div>
<!-- cursor -->
<svg class="abs" style="left:290px;top:393px" width="26" height="30" viewBox="0 0 26 30"><path d="M9.6 17.3V5.6C9.6 3.4 12.6 3.4 12.6 5.6V10.9C12.6 9.2 15.6 9.2 15.6 10.9V11.4C15.6 9.8 18.6 9.8 18.6 11.4V12.2C18.6 10.6 21.6 10.6 21.6 12.4V21C21.6 25 19.2 27.4 15.6 27.4H13.4C11.4 27.4 10 26.6 8.8 25L4.4 19.4C3.4 18 5.2 16 7 17.3L9.6 19.6Z" fill="#fff" stroke="#15151f" stroke-width="1.25" stroke-linejoin="round"/><path d="M12.6 10.9V15M15.6 11.4V15M18.6 12.2V15" stroke="#15151f" stroke-width="1"/></svg>
</body></html>
